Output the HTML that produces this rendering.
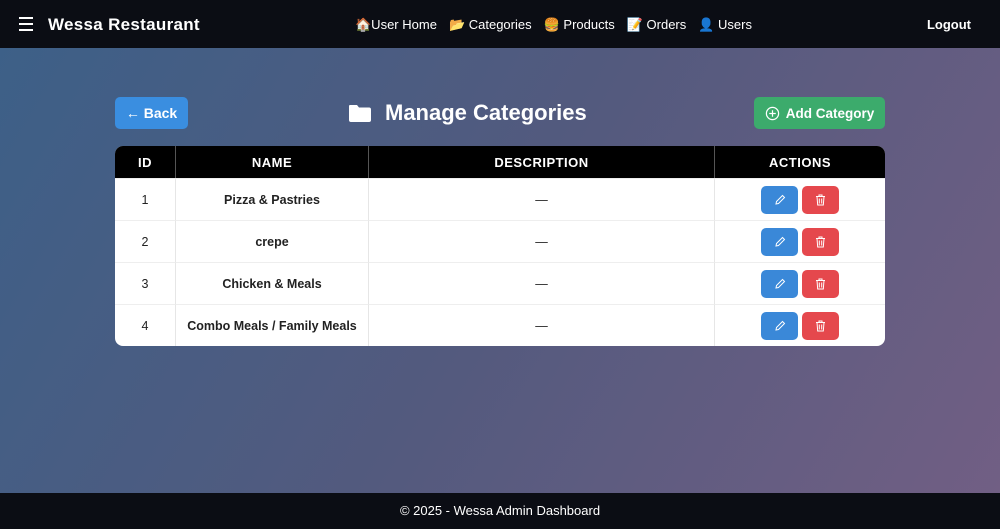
<!DOCTYPE html>
<html><head><style>
*{margin:0;padding:0;box-sizing:border-box}
body{width:1000px;height:529px;font-family:"Liberation Sans",sans-serif;background:linear-gradient(120deg,#3c6088 0%,#535a7e 50%,#725f84 100%);position:relative;overflow:hidden}
.nav{position:absolute;top:0;left:0;width:1000px;height:48px;background:#0b0d14;color:#fff}
.ham{position:absolute;left:19px;top:17px;width:14px}
.ham i{display:block;height:2px;background:#fff;margin-bottom:4px}
.brand{position:absolute;left:48px;top:15px;font-size:17px;font-weight:bold;letter-spacing:.3px}
.links{position:absolute;left:355px;top:17px;font-size:13px}
.links span{margin-right:12px}
.logout{position:absolute;right:29px;top:17px;font-size:13px;font-weight:bold}
.btn{position:absolute;color:#fff;font-weight:bold;font-size:14px;border-radius:5px;display:flex;align-items:center;justify-content:center}
.back{left:115px;top:97px;width:73px;height:32px;background:#3a8ee0}
.add{left:754px;top:97px;width:131px;height:32px;background:#3cab6c;font-size:13.5px}
h1{position:absolute;left:348px;top:100px;color:#fff;font-size:22px;font-weight:bold;display:flex;align-items:center}
table{position:absolute;left:115px;top:146px;width:770px;border-collapse:separate;border-spacing:0;background:#fff;border-radius:8px;overflow:hidden;font-size:12.5px;color:#222}
th{background:#000;color:#fff;height:32px;font-size:13px;letter-spacing:.5px;border-right:1px solid #555}
th:last-child,td:last-child{border-right:none}
td{height:42px;text-align:center;border-right:1px solid #e6e6e6;border-top:1px solid #eee}
td.n{font-weight:bold}
.e,.d{display:inline-flex;align-items:center;justify-content:center;width:37px;height:28px;border-radius:5px;vertical-align:middle;margin:0 2px}
.e{background:#3a88d8}.d{background:#e5484d}
.foot{position:absolute;left:0;top:493px;width:1000px;height:36px;background:#0b0d14;color:#fff;font-size:13px;text-align:center;line-height:36px}
</style></head><body>
<div class="nav"><div class="ham"><i></i><i></i><i></i></div><div class="brand">Wessa Restaurant</div>
<div class="links"><span>🏠User Home</span><span>📂 Categories</span><span>🍔 Products</span><span>📝 Orders</span><span>👤 Users</span></div>
<div class="logout">Logout</div></div>
<div class="btn back">← Back</div>
<h1><svg width="24" height="20" viewBox="0 0 24 20" style="margin-right:13px"><path d="M2 2h7l2 2.5h10a2 2 0 0 1 2 2V17a2 2 0 0 1-2 2H3a2 2 0 0 1-2-2V3a1 1 0 0 1 1-1z" fill="#fff"/></svg>Manage Categories</h1>
<div class="btn add"><svg width="15" height="15" viewBox="0 0 16 16" style="margin-right:6px"><circle cx="8" cy="8" r="6.5" fill="none" stroke="#fff" stroke-width="1.3"/><path d="M8 4.5v7M4.5 8h7" stroke="#fff" stroke-width="1.3"/></svg>Add Category</div>
<table>
<tr><th style="width:61px">ID</th><th style="width:193px">NAME</th><th style="width:346px">DESCRIPTION</th><th>ACTIONS</th></tr>
<tr><td>1</td><td class="n">Pizza &amp; Pastries</td><td>—</td><td><span class="e"><svg width="12" height="12" viewBox="0 0 12 12"><path d="M2 10l.5-2.5L8.5 1.5l2 2-6 6z" fill="none" stroke="#fff" stroke-width="1"/></svg></span><span class="d"><svg width="11" height="12" viewBox="0 0 11 12"><path d="M1 2.5h9M4 2.5V1h3v1.5M2 2.5l.7 8.5h5.6l.7-8.5M4.3 4.5v5M6.7 4.5v5" fill="none" stroke="#fff" stroke-width="1"/></svg></span></td></tr>
<tr><td>2</td><td class="n">crepe</td><td>—</td><td><span class="e"><svg width="12" height="12" viewBox="0 0 12 12"><path d="M2 10l.5-2.5L8.5 1.5l2 2-6 6z" fill="none" stroke="#fff" stroke-width="1"/></svg></span><span class="d"><svg width="11" height="12" viewBox="0 0 11 12"><path d="M1 2.5h9M4 2.5V1h3v1.5M2 2.5l.7 8.5h5.6l.7-8.5M4.3 4.5v5M6.7 4.5v5" fill="none" stroke="#fff" stroke-width="1"/></svg></span></td></tr>
<tr><td>3</td><td class="n">Chicken &amp; Meals</td><td>—</td><td><span class="e"><svg width="12" height="12" viewBox="0 0 12 12"><path d="M2 10l.5-2.5L8.5 1.5l2 2-6 6z" fill="none" stroke="#fff" stroke-width="1"/></svg></span><span class="d"><svg width="11" height="12" viewBox="0 0 11 12"><path d="M1 2.5h9M4 2.5V1h3v1.5M2 2.5l.7 8.5h5.6l.7-8.5M4.3 4.5v5M6.7 4.5v5" fill="none" stroke="#fff" stroke-width="1"/></svg></span></td></tr>
<tr><td>4</td><td class="n">Combo Meals / Family Meals</td><td>—</td><td><span class="e"><svg width="12" height="12" viewBox="0 0 12 12"><path d="M2 10l.5-2.5L8.5 1.5l2 2-6 6z" fill="none" stroke="#fff" stroke-width="1"/></svg></span><span class="d"><svg width="11" height="12" viewBox="0 0 11 12"><path d="M1 2.5h9M4 2.5V1h3v1.5M2 2.5l.7 8.5h5.6l.7-8.5M4.3 4.5v5M6.7 4.5v5" fill="none" stroke="#fff" stroke-width="1"/></svg></span></td></tr>
</table>
<div class="foot">© 2025 - Wessa Admin Dashboard</div>
</body></html>
